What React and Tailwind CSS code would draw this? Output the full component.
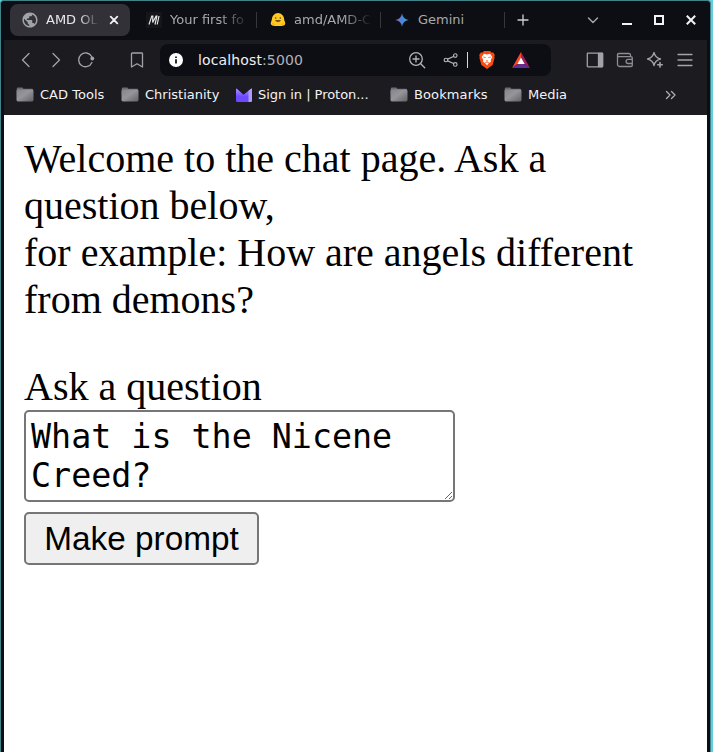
import React from 'react';

const fade = '[mask-image:linear-gradient(to_right,black_62%,transparent)]';

function Folder() {
  return (
    <svg width="18" height="16" viewBox="0 0 18 16" className="shrink-0">
      <defs>
        <linearGradient id="fold" x1="0" y1="0" x2="1" y2="1">
          <stop offset="0" stopColor="#85848a" />
          <stop offset=".45" stopColor="#96959b" />
          <stop offset="1" stopColor="#626166" />
        </linearGradient>
      </defs>
      <path d="M1.500.5H6.500l.8 1.300H16a1 1 0 0 1 1 1V8H.8V1.300z" fill="#6d6c71" />
      <rect x=".5" y="2.500" width="17" height="12" rx="1.400" fill="url(#fold)" />
    </svg>
  );
}

function Line({ size = 18, width = 1.3, color = '#a3a2a9', box = '0 0 18 18', children }) {
  return (
    <svg width={size} height={size} viewBox={box} fill="none" stroke={color} strokeWidth={width} strokeLinecap="round" strokeLinejoin="round" className="shrink-0">
      {children}
    </svg>
  );
}

function Tabs() {
  return (
    <div className="flex h-[39px] shrink-0 items-center bg-[#0d0e13] pb-[2px] pl-[6px] text-[13px] text-[#a9a9b0]">
      <div className="flex h-8 w-[120px] shrink-0 items-center rounded-[8px] bg-[#323137] pl-3 text-[#e8e8ec]">
        <svg width="16" height="16" viewBox="1.4 1.4 21.200 21.200" className="shrink-0">
          <path d="M12 2C6.480 2 2 6.480 2 12s4.480 10 10 10 10-4.480 10-10S17.520 2 12 2zm-1 17.930c-3.950-.49-7-3.850-7-7.930 0-.62.080-1.210.21-1.790L9 15v1c0 1.100.9 2 2 2v1.930zm6.900-2.540c-.26-.81-1-1.390-1.900-1.390h-1v-3c0-.55-.45-1-1-1H8v-2h2c.55 0 1-.45 1-1V7h2c1.100 0 2-.9 2-2v-.41c2.930 1.190 5 4.060 5 7.410 0 2.080-.8 3.970-2.100 5.390z" fill="#a0a4aa" />
        </svg>
        <span className={`ml-2 mr-[10px] w-[53px] shrink-0 whitespace-nowrap ${fade}`}>AMD OL</span>
        <Line size={10} box="0 0 10 10" width={1.8} color="#f1f1f3"><path d="M1.700 1.700l6.600 6.600M8.300 1.700l-6.600 6.600" /></Line>
      </div>
      <div className="flex w-[126px] shrink-0 items-center pl-4">
        <svg width="16" height="16" viewBox="0 0 16 16" className="shrink-0">
          <path d="M0 0h16v16H0z" fill="#15151a" />
          <path d="M3 12.500L5.800 4h1L6.700 10.500l3.400-6.500h.8L9 12.500M11.200 12.500L13 4" fill="none" stroke="#e6e6e6" strokeWidth="1.200" />
        </svg>
        <span className={`ml-2 w-[80px] whitespace-nowrap ${fade}`}>Your first fo</span>
      </div>
      <div className="flex h-4 w-[124px] shrink-0 items-center border-l border-[#36363c] pl-[13px]">
        <svg width="16" height="16" viewBox="0 0 16 16" className="shrink-0">
          <path d="M1.800 7.500a6.200 6.500 0 0 1 12.400 0c.1 1.600 1.400 3 1 4.600-1 2-3 2.100-5 1.800H5.800c-2 .3-4 .2-5-1.800-.4-1.600.9-3 1-4.600z" fill="#ffc91f" />
          <path d="M5.200 8h5.600c-.5 2.700-5.100 2.700-5.600 0z" fill="#7a4f22" />
          <circle cx="5.700" cy="6" r=".8" fill="#4a4031" /><circle cx="10.300" cy="6" r=".8" fill="#4a4031" />
          <path d="M2 11l3 2.200M14 11l-3 2.200" stroke="#f0a010" strokeWidth=".8" />
        </svg>
        <span className={`ml-2 w-[78px] whitespace-nowrap ${fade}`}>amd/AMD-C</span>
      </div>
      <div className="flex h-4 w-[124px] shrink-0 items-center border-l border-[#36363c] pl-[13px]">
        <svg width="16" height="16" viewBox="0 0 16 16" className="shrink-0">
          <defs><linearGradient id="gem"><stop stopColor="#9168c0" /><stop offset=".5" stopColor="#4b86d8" /><stop offset="1" stopColor="#26a5dc" /></linearGradient></defs>
          <path d="M8 1.400C8.700 5.200 11 7.400 14.600 8 11 8.600 8.700 10.800 8 14.600 7.300 10.800 5 8.600 1.400 8 5 7.400 7.300 5.200 8 1.400z" fill="url(#gem)" />
        </svg>
        <span className="ml-2">Gemini</span>
      </div>
      <div className="flex h-4 w-[83px] shrink-0 items-center border-l border-[#36363c] pl-[12px]">
        <Line size={12} box="0 0 12 12" color="#d0d0d4"><path d="M6 1v10M1 6h10" /></Line>
      </div>
      <Line size={12} box="0 0 12 12" width={1.5}><path d="M1.500 4L6 8.500 10.500 4" /></Line>
      <div className="ml-[23px] mt-[8px] h-[2px] w-[10px] bg-[#f3f3f5]" />
      <div className="ml-[22px] h-[10px] w-[10px] border-2 border-[#f3f3f5]" />
      <svg width="10" height="10" viewBox="0 0 10 10" stroke="#f3f3f5" strokeWidth="2" className="ml-[22px]"><path d="M.8.8l8.400 8.400M9.200.8L.8 9.200" /></svg>
    </div>
  );
}

function Toolbar() {
  return (
    <div className="flex h-10 shrink-0 items-center pl-[13px]">
      <Line><path d="M12 2.500L5.500 9l6.500 6.500" /></Line>
      <span className="ml-[12px] flex"><Line><path d="M6 2.500L12.500 9 6 15.500" /></Line></span>
      <span className="ml-[12px] flex">
        <Line><path d="M14.900 11.500A6.900 6.900 0 1 1 14.600 5.500" /><circle cx="15.300" cy="7.500" r="1.900" fill="#a3a2a9" stroke="none" /></Line>
      </span>
      <span className="ml-[33px] flex"><Line><path d="M4.300 2h9.400a.8.800 0 0 1 .8.800V16L9 12.800 3.500 16V2.800a.8.800 0 0 1 .8-.8z" /></Line></span>
      <div className="ml-[14px] flex h-8 w-[391px] shrink-0 items-center rounded-[8px] bg-[#0d0e13] pl-[9px]">
        <svg width="14" height="14" viewBox="0 0 14 14" className="shrink-0"><circle cx="7" cy="7" r="7" fill="#fff" /><path d="M6.100 6.200h1.800v4.300H6.100zM6.100 3.400h1.800v1.700H6.100z" fill="#15161b" /></svg>
        <div className="ml-[15px] w-[210px] shrink-0 text-[14px] tracking-[0.13px] text-[#f0f0f2]">localhost<span className="text-[#b3b3ba]">:5000</span></div>
        <Line color="#b4b3ba"><circle cx="8" cy="8" r="6.300" /><path d="M12.700 12.700l4 4M5 8h6M8 5v6" /></Line>
        <span className="ml-[17px] flex"><Line size={16} color="#b4b3ba"><circle cx="3.300" cy="9" r="2" /><circle cx="13.800" cy="4" r="2" /><circle cx="13.800" cy="14" r="2" /><path d="M5.300 8l6.500-3M5.300 10l6.500 3" /></Line></span>
        <div className="ml-[8px] h-4 w-px bg-[#d8d8dc]" />
        <svg width="16" height="18" viewBox="0 0 16 18" className="ml-[11px] shrink-0">
          <path d="M5 0h6l1.500 1.600 1.700-.2L15.800 4l-.5 1.500.3 1.200-2 7.300L8 18l-5.600-4L.4 6.700l.3-1.200L.2 4l1.600-2.600 1.700.2z" fill="#fb4b10" />
          <path d="M8 3.500l3-.7L13.300 6l-1.700 3 .5 1.600-2 1.500L8 14.300 5.900 12.100l-2-1.500.5-1.600-1.700-3L5 2.800z" fill="#fff" />
          <path d="M4.200 6l2.500.6M11.800 6l-2.500.6M7 9.500l1 .7 1-.7M6 12l2-1 2 1" stroke="#fb4b10" fill="none" strokeWidth=".8" />
        </svg>
        <svg width="18" height="16" viewBox="0 0 18 16" className="ml-[17px] shrink-0">
          <path d="M9 0L0 16 5.500 12 9 5.500z" fill="#ff4724" /><path d="M9 0l9 16-5.500-4L9 5.500z" fill="#9e1f63" /><path d="M0 16h18l-5.500-4h-7z" fill="#662d91" /><path d="M9 5.500L12.700 12H5.300z" fill="#fff" />
        </svg>
      </div>
      <span className="ml-[35px] flex"><Line><path d="M2 2.200h14a.7.700 0 0 1 .7.700v12.200a.7.700 0 0 1-.7.700H2a.7.700 0 0 1-.7-.7V2.900a.7.700 0 0 1 .7-.7z" /><path d="M12.500 2.500h3.900v13h-3.900z" fill="#a3a2a9" /></Line></span>
      <span className="ml-[12px] flex"><Line color="#8e8d94"><path d="M14.500 5.500V4a1.500 1.500 0 0 0-1.500-1.500H3a1.500 1.500 0 0 0 0 3.200h12A1.300 1.300 0 0 1 16.300 7v7.200a1.300 1.300 0 0 1-1.300 1.300H3.500a2 2 0 0 1-2-2V4.200M16.300 8.300h-4.100a2.100 2.100 0 0 0 0 4.200h4.100" /></Line></span>
      <span className="ml-[12px] flex"><Line><path d="M8 1.500c.9 4 2.500 5.600 6.500 6.500-4 .9-5.600 2.500-6.500 6.500C7.100 10.500 5.500 8.900 1.500 8 5.500 7.100 7.100 5.500 8 1.500z" /><path d="M14 11.500v4.600M11.700 13.800h4.600" strokeWidth="1.600" /></Line></span>
      <span className="ml-[12px] flex"><Line><path d="M2 3.500h14M2 9h14M2 14.500h14" /></Line></span>
    </div>
  );
}

function Bookmark({ label, width, icon, className = '' }) {
  return (
    <div className="flex shrink-0 items-center whitespace-nowrap" style={{ width }}>
      {icon || <Folder />}
      <span className={`ml-[6px] ${className}`}>{label}</span>
    </div>
  );
}

function Proton() {
  return (
    <svg width="16" height="14" viewBox="0 0 16 14" className="shrink-0">
      <defs><linearGradient id="mail" x1="0" y1="0" x2="0" y2="1"><stop stopColor="#a891ff" /><stop offset=".6" stopColor="#6d4aff" /></linearGradient></defs>
      <path d="M0 1.500Q0 0 1.200.9L7.500 6.800 14.800.9Q16 0 16 1.500V12.500Q16 14 14.500 14H1.500Q0 14 0 12.500z" fill="url(#mail)" />
      <path d="M12.500 2.800L14.800.9Q16 0 16 1.500V12.500Q16 14 14.500 14H12.500z" fill="#ad9bff" />
    </svg>
  );
}

export default function App() {
  return (
    <div className="flex h-[752px] w-[713px] overflow-hidden bg-[#64cddc]">
      <div className="flex w-[711px] flex-col rounded-t-[4px] border-x border-t border-[#41838b] bg-[#0d0e13] font-['DejaVu_Sans',sans-serif]">
        <div className="flex grow flex-col pl-[3px] pr-[3px]">
          <Tabs />
          <div className="flex h-[75px] shrink-0 flex-col bg-[#1c1b20]">
            <Toolbar />
            <div className="flex h-[29px] items-center pl-3 text-[13px] text-[#f3f3f6]">
              <Bookmark label="CAD Tools" width={105} className="tracking-[0.03px]" />
              <Bookmark label="Christianity" width={115} />
              <Bookmark label="Sign in | Proton..." width={154} icon={<Proton />} className="tracking-[-0.04px]" />
              <Bookmark label="Bookmarks" width={114} className="tracking-[0.12px]" />
              <Bookmark label="Media" width={161} />
              <Line size={12} box="0 0 12 12" width={1.300} color="#b0b0b7"><path d="M1.500 2.500L5 6 1.500 9.500M6.500 2.500L10 6 6.500 9.500" /></Line>
            </div>
          </div>
          <main className="flex grow flex-col items-start bg-white pl-5 pt-5 font-['Liberation_Serif',serif] text-[40px] leading-[47px] text-black">
            <p className="w-[663px]">Welcome to the chat page. Ask a question below,<br />for example: How are angels different from demons?</p>
            <label className="mt-10">Ask a question</label>
            <textarea readOnly defaultValue="What is the Nicene Creed?" className="block h-[92px] w-[431px] resize overflow-hidden rounded-[5px] border-2 border-[#767676] px-[5px] py-[5px] font-['DejaVu_Sans_Mono',monospace] text-[33.333px] leading-[39px]" />
            <button className="mt-[10px] h-[53px] w-[235px] rounded-[5px] border-2 border-[#767676] bg-[#efefef] font-['Liberation_Sans',sans-serif] text-[33.333px] leading-[38px]">Make prompt</button>
          </main>
        </div>
      </div>
    </div>
  );
}
